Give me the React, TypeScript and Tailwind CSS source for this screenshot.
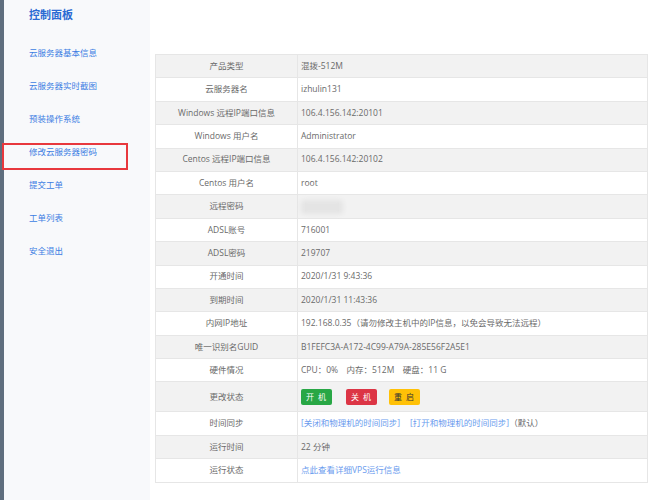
const menu = [
  "云服务器基本信息",
  "云服务器实时截图",
  "预装操作系统",
  "修改云服务器密码",
  "提交工单",
  "工单列表",
  "安全退出",
];

type Row = { label: string; value: React.ReactNode; tall?: boolean };

const Btn = ({ text, cls }: { text: string; cls: string }) => (
  <span
    className={`inline-flex h-[16px] w-[31px] items-center justify-center rounded-[2px] pl-[3px] text-[8px] tracking-[4px] ${cls}`}
  >
    {text}
  </span>
);

const rows: Row[] = [
  { label: "产品类型", value: "混拨-512M" },
  { label: "云服务器名", value: "izhulin131" },
  { label: "Windows 远程IP端口信息", value: "106.4.156.142:20101" },
  { label: "Windows 用户名", value: "Administrator" },
  { label: "Centos 远程IP端口信息", value: "106.4.156.142:20102" },
  { label: "Centos 用户名", value: "root" },
  {
    label: "远程密码",
    value: <span className="inline-block h-[14px] w-[42px] rounded-sm bg-[#e4e4e4] blur-[2px] align-middle" />,
  },
  { label: "ADSL账号", value: "716001" },
  { label: "ADSL密码", value: "219707" },
  { label: "开通时间", value: "2020/1/31 9:43:36" },
  { label: "到期时间", value: "2020/1/31 11:43:36" },
  { label: "内网IP地址", value: "192.168.0.35（请勿修改主机中的IP信息，以免会导致无法远程）" },
  { label: "唯一识别名GUID", value: "B1FEFC3A-A172-4C99-A79A-285E56F2A5E1" },
  { label: "硬件情况", value: "CPU：0%　内存：512M　硬盘：11 G" },
  {
    label: "更改状态",
    tall: true,
    value: (
      <div className="flex items-center">
        <Btn text="开机" cls="bg-[#28a745] text-white" />
        <span className="ml-[14px]"><Btn text="关机" cls="bg-[#dc3545] text-white" /></span>
        <span className="ml-[12px]"><Btn text="重启" cls="bg-[#ffc107] text-[#333]" /></span>
      </div>
    ),
  },
  {
    label: "时间同步",
    value: (
      <span>
        <span className="text-[#6a9bee]">[关闭和物理机的时间同步]</span>
        <span className="ml-[10px] text-[#6a9bee]">[打开和物理机的时间同步]</span>
        <span>（默认）</span>
      </span>
    ),
  },
  { label: "运行时间", value: "22 分钟" },
  { label: "运行状态", value: <span className="text-[#6a9bee]">点此查看详细VPS运行信息</span> },
];

export default function App() {
  return (
    <div
      className="relative flex h-[500px] w-[671px] overflow-hidden bg-white"
      style={{ fontFamily: '"Open Sans", "Noto Sans CJK SC", sans-serif' }}
    >
      <div className="w-[4px] shrink-0 bg-[#5f6e7e]" />
      <aside className="w-[146px] shrink-0 bg-[#f8f9fb]">
        <div className="flex h-[31px] items-center pl-[25px] text-[11px] font-bold text-[#2b6bd3]">
          控制面板
        </div>
        <ul className="mt-[5.5px]">
          {menu.map((m) => (
            <li key={m} className="flex h-[33px] items-center pl-[25px] text-[8.5px] text-[#3c7ee3]">
              {m}
            </li>
          ))}
        </ul>
      </aside>
      <main className="flex-1 pl-[5px] pt-[54px]">
        <table className="w-[493px] border-collapse text-[8.5px] text-[#6a6a6a]">
          <tbody>
            {rows.map((r, i) => (
              <tr
                key={r.label}
                className={`${r.tall ? "h-[30px]" : "h-[23.4px]"} ${i % 2 === 0 ? "bg-[#f2f2f2]" : "bg-white"}`}
              >
                <td className="w-[142px] border border-[#e6e6e6] p-0 text-center">{r.label}</td>
                <td className="border border-[#e6e6e6] p-0 pl-[3px]">{r.value}</td>
              </tr>
            ))}
          </tbody>
        </table>
      </main>
      <div className="absolute left-[2px] top-[143px] h-[27px] w-[126px] border-2 border-[#e8383d]" />
    </div>
  );
}
